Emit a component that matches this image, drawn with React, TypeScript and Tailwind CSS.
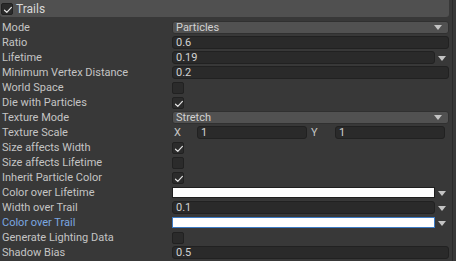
import React from "react";

const Check = () => (
  <svg width="12" height="12" viewBox="0 0 12 12" className="absolute left-0 top-0">
    <path d="M2.5 6.2 L4.8 8.4 L9.4 3.4" fill="none" stroke="#e6e6e6" strokeWidth="1.2" strokeLinecap="round" strokeLinejoin="round" />
  </svg>
);

const CheckBox = ({ checked }: { checked?: boolean }) => (
  <div className="relative w-[12px] h-[12px] rounded-[2px] bg-[#2b2b2b] border border-[#212121]">
    {checked && <Check />}
  </div>
);

const Arrow = () => (
  <svg width="8" height="5" viewBox="0 0 8 5">
    <path d="M0 0 L8 0 L4 5 Z" fill="#c4c4c4" />
  </svg>
);

const Label = ({ children, blue }: { children: React.ReactNode; blue?: boolean }) => (
  <div className={`w-[172px] shrink-0 pl-[2px] whitespace-nowrap ${blue ? "text-[#7ba7e0]" : "text-[#c4c4c4]"}`}>
    {children}
  </div>
);

const Row = ({ children }: { children: React.ReactNode }) => (
  <div className="h-[15px] flex items-center">{children}</div>
);

const NumField = ({ value, className = "" }: { value: string; className?: string }) => (
  <div className={`h-[13px] rounded-[3px] bg-[#2a2a2a] border border-[#212121] pl-[3px] flex items-center text-[#d2d2d2] ${className}`}>
    {value}
  </div>
);

const Popup = ({ value }: { value: string }) => (
  <div className="w-[277px] h-[13px] rounded-[3px] bg-[#515151] border border-[#303030] pl-[3px] pr-[6px] flex items-center justify-between text-[#d2d2d2]">
    <span>{value}</span>
    <Arrow />
  </div>
);

const WithArrow = ({ children }: { children: React.ReactNode }) => (
  <div className="w-[277px] flex items-center">
    <div className="w-[263px]">{children}</div>
    <div className="flex-1 flex justify-center pt-[1px]">
      <Arrow />
    </div>
  </div>
);

export default function App() {
  return (
    <div
      className="w-[456px] h-[261px] bg-[#383838] flex overflow-hidden text-[11px] leading-none"
      style={{ fontFamily: "Roboto, 'Noto Sans', sans-serif" }}
    >
      <div className="w-[452px] flex flex-col">
        <div className="h-[17px] mb-[3px] w-[449px] bg-[#505050] rounded-b-[3px] flex items-center pl-[1px] gap-[3px]">
          <CheckBox checked />
          <span className="text-[#d8d8d8] text-[12px]">Trails</span>
        </div>
        <Row>
          <Label>Mode</Label>
          <Popup value="Particles" />
        </Row>
        <Row>
          <Label>Ratio</Label>
          <NumField value="0.6" className="w-[277px]" />
        </Row>
        <Row>
          <Label>Lifetime</Label>
          <WithArrow>
            <NumField value="0.19" className="w-full" />
          </WithArrow>
        </Row>
        <Row>
          <Label>Minimum Vertex Distance</Label>
          <NumField value="0.2" className="w-[277px]" />
        </Row>
        <Row>
          <Label>World Space</Label>
          <CheckBox />
        </Row>
        <Row>
          <Label>Die with Particles</Label>
          <CheckBox checked />
        </Row>
        <Row>
          <Label>Texture Mode</Label>
          <Popup value="Stretch" />
        </Row>
        <Row>
          <Label>Texture Scale</Label>
          <div className="w-[273px] flex items-center text-[#c4c4c4]">
            <span className="w-[25px] pl-[2px]">X</span>
            <NumField value="1" className="w-[110px]" />
            <span className="w-[28px] pl-[4px]">Y</span>
            <NumField value="1" className="w-[110px]" />
          </div>
        </Row>
        <Row>
          <Label>Size affects Width</Label>
          <CheckBox checked />
        </Row>
        <Row>
          <Label>Size affects Lifetime</Label>
          <CheckBox />
        </Row>
        <Row>
          <Label>Inherit Particle Color</Label>
          <CheckBox checked />
        </Row>
        <Row>
          <Label>Color over Lifetime</Label>
          <WithArrow>
            <div className="h-[11px] w-full bg-white border border-[#1f1f1f]" />
          </WithArrow>
        </Row>
        <Row>
          <Label>Width over Trail</Label>
          <WithArrow>
            <NumField value="0.1" className="w-full" />
          </WithArrow>
        </Row>
        <Row>
          <Label blue>Color over Trail</Label>
          <WithArrow>
            <div className="h-[11px] w-full bg-white border border-[#3d7bc4]" />
          </WithArrow>
        </Row>
        <Row>
          <Label>Generate Lighting Data</Label>
          <CheckBox />
        </Row>
        <Row>
          <Label>Shadow Bias</Label>
          <NumField value="0.5" className="w-[277px]" />
        </Row>
      </div>
      <div className="w-px bg-[#2a2a2a]" />
    </div>
  );
}
